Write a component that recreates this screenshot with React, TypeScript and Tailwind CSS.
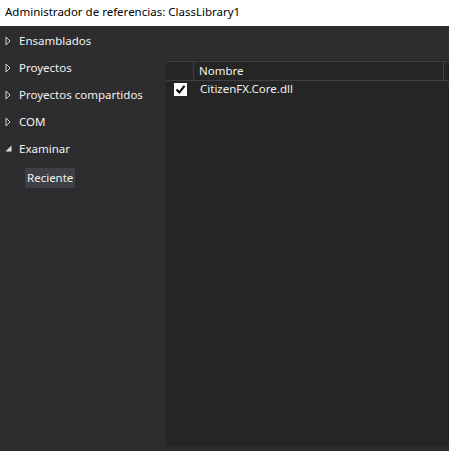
import React from 'react'

const navItems = ['Ensamblados', 'Proyectos', 'Proyectos compartidos', 'COM']

function ArrowRight() {
  return (
    <svg width="6" height="10" viewBox="0 0 6 10" className="shrink-0">
      <path d="M1 1 L5 5 L1 9 Z" fill="none" stroke="#d0d0d0" strokeWidth="1" />
    </svg>
  )
}

function ArrowDown() {
  return (
    <svg width="7" height="7" viewBox="0 0 7 7" className="shrink-0">
      <path d="M6.5 0.5 L6.5 6.5 L0.5 6.5 Z" fill="#e0e0e0" />
    </svg>
  )
}

export default function App() {
  return (
    <div
      className="w-[449px] h-[451px] flex flex-col bg-[#2d2d30] text-[11.5px] overflow-hidden"
      style={{ fontFamily: '"Segoe UI", "Noto Sans", sans-serif' }}
    >
      <div className="h-[26px] bg-white text-black flex items-center pl-[5px] pb-[2px]">
        Administrador de referencias: ClassLibrary1
      </div>
      <div className="flex flex-1">
        <div className="w-[166px] shrink-0 text-[#f1f1f1] pt-[1px]">
          {navItems.map((item) => (
            <div key={item} className="h-[27px] flex items-center gap-[8px] pl-[5px]">
              <ArrowRight />
              <span>{item}</span>
            </div>
          ))}
          <div className="h-[27px] flex items-center gap-[7px] pl-[5px]">
            <ArrowDown />
            <span>Examinar</span>
          </div>
          <div className="pl-[25px] pt-[6px]">
            <span className="inline-block bg-[#3f3f46] px-[2px] h-[20px] leading-[20px]">Reciente</span>
          </div>
        </div>
        <div className="flex-1 mt-[34px] mb-[5px] bg-[#252526] text-[#f1f1f1]">
          <div className="h-[20px] mt-[1px] border-t border-b border-[#3f3f46] flex">
            <div className="w-[28px] border-r border-[#3f3f46]" />
            <div className="w-[250px] border-r border-[#3f3f46] pl-[5px] leading-[18px]">Nombre</div>
          </div>
          <div className="h-[16px] flex items-center">
            <div className="w-[28px] flex justify-center">
              <div className="w-[13px] h-[13px] bg-white flex items-center justify-center">
                <svg width="11" height="11" viewBox="0 0 11 11">
                  <path d="M1.5 5.5 L4.3 8.5 L9.5 1.8" fill="none" stroke="#000" strokeWidth="2" />
                </svg>
              </div>
            </div>
            <div className="pl-[6px]">CitizenFX.Core.dll</div>
          </div>
        </div>
      </div>
    </div>
  )
}
